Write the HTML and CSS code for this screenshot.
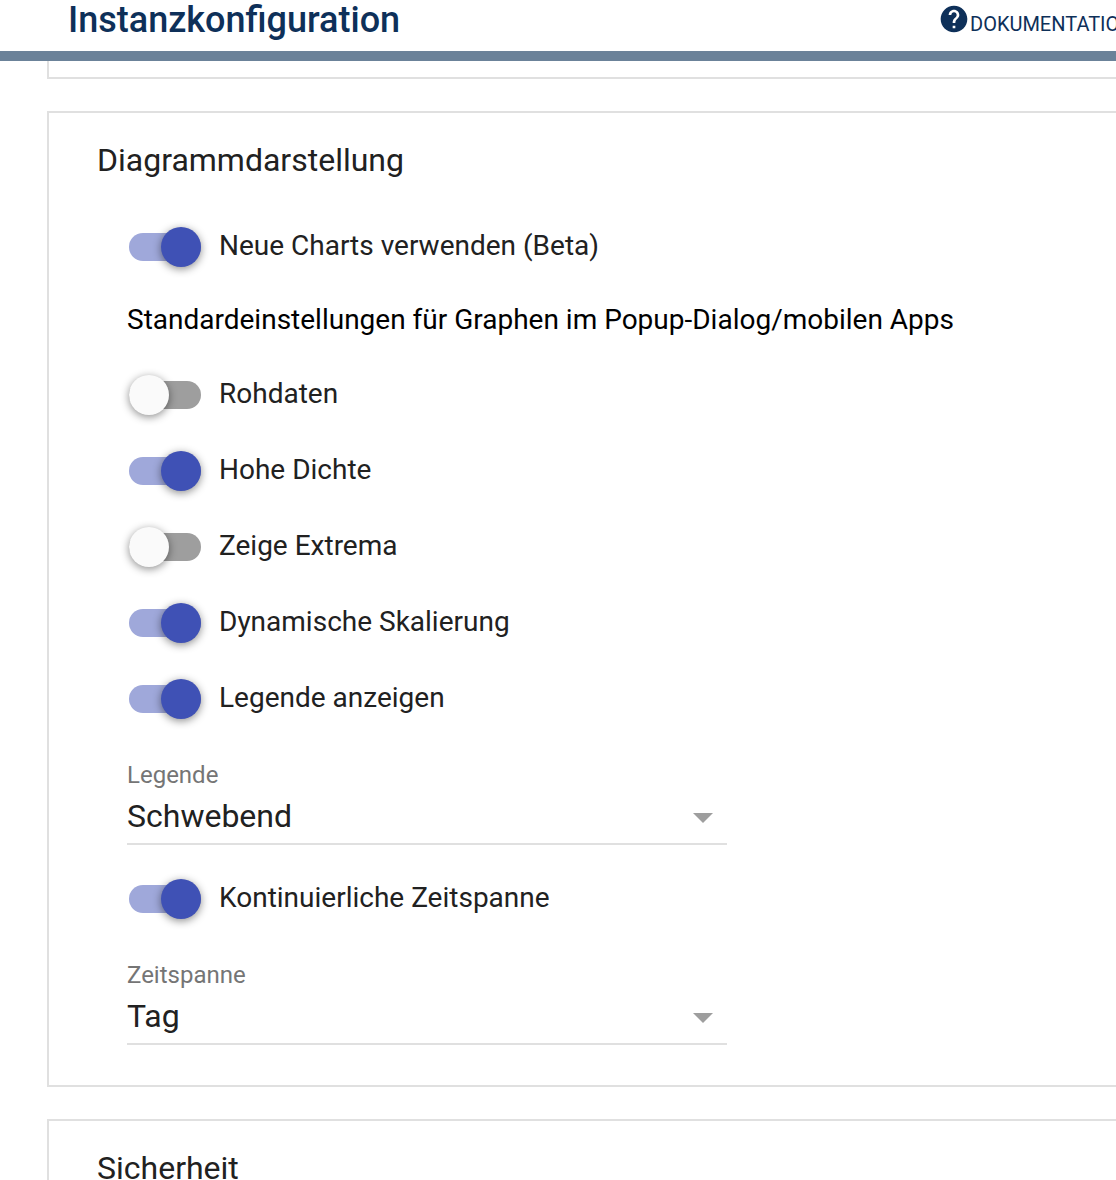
FILE: index.html
```html
<!DOCTYPE html>
<html lang="de">
<head>
<meta charset="utf-8">
<title>Instanzkonfiguration</title>
<link rel="stylesheet" href="styles.css">
</head>
<body>
<header class="topbar">
  <h1 class="title">Instanzkonfiguration</h1>
  <a class="doc-link">
    <svg class="doc-icon" viewBox="0 0 24 24" aria-hidden="true"><path d="M12 2C6.48 2 2 6.48 2 12s4.48 10 10 10 10-4.48 10-10S17.52 2 12 2zm1 17h-2v-2h2v2zm2.07-7.75l-.9.92C13.45 12.9 13 13.5 13 15h-2v-.5c0-1.1.45-2.1 1.17-2.83l1.24-1.26c.37-.36.59-.86.59-1.41 0-1.1-.9-2-2-2s-2 .9-2 2H8c0-2.21 1.79-4 4-4s4 1.79 4 4c0 .88-.36 1.68-.93 2.25z"/></svg>
    <span class="doc-text">DOKUMENTATION</span>
  </a>
</header>
<main class="content">
  <div class="panel panel-stub"></div>
  <section class="panel panel-chart">
    <h2 class="panel-title">Diagrammdarstellung</h2>
    <div class="row row-first"><span class="toggle on"><span class="knob"></span></span><span class="row-label">Neue Charts verwenden (Beta)</span></div>
    <p class="subhead">Standardeinstellungen für Graphen im Popup-Dialog/mobilen Apps</p>
    <div class="row row-after-subhead"><span class="toggle"><span class="knob"></span></span><span class="row-label">Rohdaten</span></div>
    <div class="row"><span class="toggle on"><span class="knob"></span></span><span class="row-label">Hohe Dichte</span></div>
    <div class="row"><span class="toggle"><span class="knob"></span></span><span class="row-label">Zeige Extrema</span></div>
    <div class="row"><span class="toggle on"><span class="knob"></span></span><span class="row-label">Dynamische Skalierung</span></div>
    <div class="row"><span class="toggle on"><span class="knob"></span></span><span class="row-label">Legende anzeigen</span></div>
    <div class="field">
      <div class="field-label">Legende</div>
      <div class="select"><span class="select-value">Schwebend</span><span class="caret"></span></div>
    </div>
    <div class="row row-after-field"><span class="toggle on"><span class="knob"></span></span><span class="row-label">Kontinuierliche Zeitspanne</span></div>
    <div class="field">
      <div class="field-label">Zeitspanne</div>
      <div class="select"><span class="select-value">Tag</span><span class="caret"></span></div>
    </div>
  </section>
  <section class="panel panel-security">
    <h2 class="panel-title">Sicherheit</h2>
  </section>
</main>
</body>
</html>
```

FILE: styles.css
```css
* { box-sizing: border-box; }
html, body {
  margin: 0;
  height: 1180px;
  overflow: hidden;
  background: #fff;
  font-family: Roboto, "Liberation Sans", sans-serif;
}
.topbar {
  height: 61px;
  border-bottom: 10px solid #6b8299;
  padding-left: 68px;
  white-space: nowrap;
  color: #0e3059;
}
.title {
  margin: 0;
  padding-top: 1px;
  font-size: 36px;
  line-height: 38px;
  font-weight: 500;
}
.doc-link {
  position: absolute;
  left: 938px;
  top: 3px;
  display: flex;
  align-items: flex-start;
}
.doc-icon {
  width: 32px;
  height: 32px;
  fill: #0e3059;
}
.doc-text {
  margin-top: 10px;
  font-size: 20px;
  line-height: 22px;
}
.content {
  padding-left: 47px;
  width: 1300px;
}
.panel {
  border: 2px solid #e0e0e0;
  width: 1200px;
}
.panel-stub {
  height: 18px;
  border-top: 0;
}
.panel-chart {
  margin-top: 32px;
  height: 976px;
  padding: 0 0 0 78px;
}
.panel-security {
  margin-top: 32px;
  height: 200px;
  padding-left: 48px;
}
.panel-title {
  margin: 0;
  font-size: 32px;
  line-height: 38px;
  font-weight: 400;
  color: #212121;
  padding-top: 28px;
  box-sizing: content-box;
}
.panel-chart .panel-title { margin-left: -30px; }
.row {
  display: flex;
  align-items: center;
  height: 40px;
  margin-top: 36px;
}
.row-first { margin-top: 48px; }
.row-after-subhead { margin-top: 39px; }
.row-after-field { margin-top: 34px; }
.row-label {
  margin-left: 18px;
  margin-bottom: 2px;
  font-size: 28px;
  line-height: 32px;
  color: #212121;
}
.toggle {
  position: relative;
  display: block;
  width: 72px;
  height: 28px;
  margin-left: 2px;
  border-radius: 14px;
  background: #9e9e9e;
}
.toggle.on { background: #9fa8da; }
.knob {
  position: absolute;
  left: 0;
  top: -6px;
  width: 40px;
  height: 40px;
  border-radius: 50%;
  background: #fafafa;
  box-shadow: 0 2px 8px rgba(0,0,0,.45);
}
.toggle.on .knob {
  left: 32px;
  background: #3f51b5;
}
.subhead {
  margin: 37px 0 0;
  font-size: 28px;
  line-height: 32px;
  color: #000;
}
.field {
  width: 600px;
  margin-top: 42px;
}
.field-label {
  font-size: 24px;
  line-height: 28px;
  color: #757575;
}
.select {
  position: relative;
  height: 56px;
  border-bottom: 2px solid #e0e0e0;
  padding-top: 7px;
}
.select-value {
  font-size: 32px;
  line-height: 40px;
  color: #212121;
}
.caret {
  position: absolute;
  right: 14px;
  top: 24px;
  width: 0;
  height: 0;
  border-left: 10px solid transparent;
  border-right: 10px solid transparent;
  border-top: 10px solid #9e9e9e;
}
```
